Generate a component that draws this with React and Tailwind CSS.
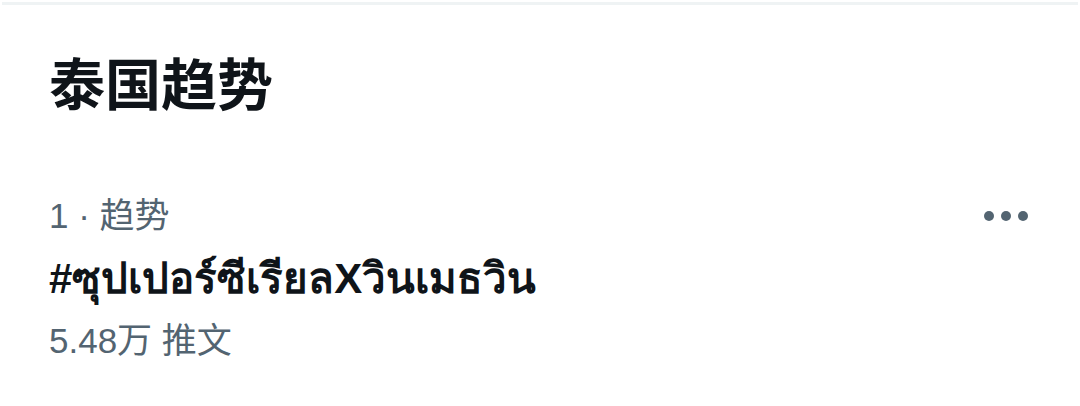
export default function App() {
  return (
    <div className="w-[1080px] h-[406px] bg-white overflow-hidden font-['Liberation_Sans','Noto_Sans_CJK_SC',sans-serif]">
      <div className="mx-[2px] mt-[2px] h-[3px] bg-[#eff3f4]" />
      <h2 className="mt-[46px] ml-[49px] text-[56px] leading-[70px] font-bold text-[#0f1419]">泰国趋势</h2>
      <div className="mt-[70px] pl-[49px] pr-[52px] flex justify-between">
        <div>
          <div className="text-[35px] leading-[50px] text-[#536471]">1 · 趋势</div>
          <div className="text-[42px] leading-[76px] font-bold text-[#0f1419]">#ซุปเปอร์ซีเรียลXวินเมธวิน</div>
          <div className="text-[35px] leading-[48px] text-[#536471]">5.48万 推文</div>
        </div>
        <div className="flex gap-[7px] mt-[20px] h-[10px]">
          <span className="w-[10px] h-[10px] rounded-full bg-[#536471]" />
          <span className="w-[10px] h-[10px] rounded-full bg-[#536471]" />
          <span className="w-[10px] h-[10px] rounded-full bg-[#536471]" />
        </div>
      </div>
    </div>
  )
}
